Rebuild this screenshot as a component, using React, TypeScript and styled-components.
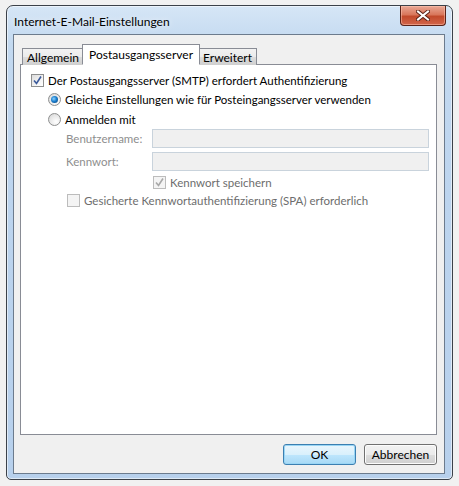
import React from 'react';
import styled, { createGlobalStyle, css } from 'styled-components';

const GlobalStyle = createGlobalStyle`
  html, body {
    margin: 0;
    padding: 0;
    background: #f1f1f1;
  }
  body {
    font-family: "Segoe UI", Lato, "Liberation Sans", sans-serif;
    font-size: 12px;
    color: #000;
  }
`;

const Page = styled.div`
  width: 459px;
  height: 486px;
  padding: 5px 6px 0 6px;
  box-sizing: border-box;
`;

// Aero glass frame around the dialog
const Window = styled.div`
  width: 447px;
  height: 475px;
  box-sizing: border-box;
  border: 1px solid #3b4149;
  border-radius: 7px 7px 5px 5px;
  background: linear-gradient(180deg, #d6e6f6 0%, #c3d9f0 8%, #bcd4ee 40%, #b7d0ec 100%);
  box-shadow: inset 0 0 0 1px rgba(255, 255, 255, 0.55);
  display: flex;
  flex-direction: column;
  padding: 0 7px 7px 6px;
`;

const TitleBar = styled.div`
  height: 28px;
  display: flex;
  justify-content: space-between;
  align-items: flex-start;
  flex-shrink: 0;
`;

const Title = styled.div`
  padding: 8px 0 0 1px;
  font-size: 12px;
  color: #000;
  text-shadow: 0 0 6px rgba(255, 255, 255, 0.9);
`;

const CloseButton = styled.div`
  width: 44px;
  height: 19px;
  margin-right: -1px;
  border: 1px solid #5a2218;
  border-top: none;
  border-radius: 0 0 4px 4px;
  background: linear-gradient(180deg, #e9a896 0%, #d9775c 45%, #c24a2c 55%, #d2664a 100%);
  box-shadow: inset 0 0 0 1px rgba(255, 200, 180, 0.5);
  display: flex;
  align-items: center;
  justify-content: center;
`;

const Client = styled.div`
  flex: 1;
  border: 1px solid #6c7b8d;
  background: #f0f0f0;
  display: flex;
  flex-direction: column;
  padding: 9px 7px 8px 6px;
`;

const TabStrip = styled.div`
  display: flex;
  align-items: flex-end;
  padding-left: 2px;
  height: 21px;
  position: relative;
  z-index: 1;
`;

const Tab = styled.div<{ $active?: boolean }>`
  box-sizing: border-box;
  border: 1px solid #898c95;
  font-size: 12px;
  white-space: nowrap;
  ${({ $active }) =>
    $active
      ? css`
          height: 21px;
          background: #fff;
          border-bottom-color: #fff;
          padding: 2px 6px 0 6px;
          margin: 0 -2px;
          position: relative;
          z-index: 2;
        `
      : css`
          height: 17px;
          line-height: 17px;
          padding: 0 4px;
          background: linear-gradient(180deg, #f2f2f2 0%, #ebebeb 50%, #dddddd 51%, #cfcfcf 100%);
          border-bottom: none;
        `}
`;

const Panel = styled.div`
  height: 371px;
  box-sizing: border-box;
  border: 1px solid #898c95;
  margin-top: -1px;
  background: #fff;
  padding: 9px 0 0 10px;
  display: flex;
  flex-direction: column;
  font-size: 11.5px;
`;

const Row = styled.div<{ $indent?: number; $top?: number }>`
  display: flex;
  align-items: center;
  margin-left: ${({ $indent }) => $indent ?? 0}px;
  margin-top: ${({ $top }) => $top ?? 0}px;
  height: 13px;
`;

const FieldRow = styled.div<{ $top?: number }>`
  display: flex;
  align-items: center;
  margin-left: 35px;
  margin-top: ${({ $top }) => $top ?? 0}px;
`;

const Label = styled.span<{ $disabled?: boolean }>`
  margin-left: 4px;
  white-space: nowrap;
  color: ${({ $disabled }) => ($disabled ? '#6d6d6d' : '#000')};
`;

const FieldLabel = styled.span`
  width: 86px;
  color: #8e8e8e;
  white-space: nowrap;
`;

const TextInput = styled.div`
  width: 277px;
  height: 19px;
  box-sizing: border-box;
  border: 1px solid #c9d3dc;
  background: #f0f0f0;
`;

const Box = styled.span<{ $disabled?: boolean }>`
  width: 13px;
  height: 13px;
  box-sizing: border-box;
  flex-shrink: 0;
  border: 1px solid ${({ $disabled }) => ($disabled ? '#bcbcbc' : '#8e8f8f')};
  background: ${({ $disabled }) =>
    $disabled ? '#f4f4f4' : 'linear-gradient(135deg, #dcdcdc 0%, #f3f3f3 60%, #ffffff 100%)'};
  display: flex;
  align-items: center;
  justify-content: center;
`;

const Radio = styled.span`
  width: 13px;
  height: 13px;
  box-sizing: border-box;
  flex-shrink: 0;
  border-radius: 50%;
  border: 1px solid #8e8f8f;
  background: radial-gradient(circle at 65% 70%, #ffffff 0%, #e6e6e6 60%, #cfcfcf 100%);
  display: flex;
  align-items: center;
  justify-content: center;
`;

const RadioDot = styled.span`
  width: 7px;
  height: 7px;
  border-radius: 50%;
  background: radial-gradient(circle at 40% 40%, #8fd3ff 0%, #1a7fcf 45%, #0d3c6e 100%);
`;

const ButtonRow = styled.div`
  display: flex;
  justify-content: flex-end;
  gap: 8px;
  margin-top: 9px;
`;

const Button = styled.div<{ $default?: boolean }>`
  width: 73px;
  height: 21px;
  box-sizing: border-box;
  border-radius: 3px;
  display: flex;
  align-items: center;
  justify-content: center;
  font-size: 12px;
  ${({ $default }) =>
    $default
      ? css`
          border: 1px solid #3c7fb1;
          background: linear-gradient(180deg, #eaf6fd 0%, #d9f0fc 50%, #bee6fd 51%, #a7d9f5 100%);
          box-shadow: inset 0 0 0 1px #9ad6f5;
        `
      : css`
          border: 1px solid #707070;
          background: linear-gradient(180deg, #f2f2f2 0%, #ebebeb 50%, #dddddd 51%, #cfcfcf 100%);
          box-shadow: inset 0 0 0 1px #fcfcfc;
        `}
`;

const Check = ({ color }: { color: string }) => (
  <svg width="9" height="9" viewBox="0 0 9 9">
    <path d="M1 4.5 L3.5 7.5 L8 0.5" fill="none" stroke={color} strokeWidth="1.6" />
  </svg>
);

const CloseGlyph = () => (
  <svg width="14" height="11" viewBox="0 0 14 11">
    <path d="M2 1.5 L12 9.5 M12 1.5 L2 9.5" stroke="#5a2218" strokeWidth="4" strokeLinecap="square" />
    <path d="M2 1.5 L12 9.5 M12 1.5 L2 9.5" stroke="#ffffff" strokeWidth="2" strokeLinecap="square" />
  </svg>
);

export default function App() {
  return (
    <Page>
      <GlobalStyle />
      <Window>
        <TitleBar>
          <Title>Internet-E-Mail-Einstellungen</Title>
          <CloseButton>
            <CloseGlyph />
          </CloseButton>
        </TitleBar>
        <Client>
          <TabStrip>
            <Tab>Allgemein</Tab>
            <Tab $active>Postausgangsserver</Tab>
            <Tab>Erweitert</Tab>
          </TabStrip>
          <Panel>
            <Row>
              <Box>
                <Check color="#3b5a9b" />
              </Box>
              <Label>Der Postausgangsserver (SMTP) erfordert Authentifizierung</Label>
            </Row>
            <Row $indent={17} $top={6}>
              <Radio>
                <RadioDot />
              </Radio>
              <Label>Gleiche Einstellungen wie für Posteingangsserver verwenden</Label>
            </Row>
            <Row $indent={17} $top={7}>
              <Radio />
              <Label>Anmelden mit</Label>
            </Row>
            <FieldRow $top={3}>
              <FieldLabel>Benutzername:</FieldLabel>
              <TextInput />
            </FieldRow>
            <FieldRow $top={4}>
              <FieldLabel>Kennwort:</FieldLabel>
              <TextInput />
            </FieldRow>
            <Row $indent={122} $top={5}>
              <Box $disabled>
                <Check color="#a8a8a8" />
              </Box>
              <Label $disabled>Kennwort speichern</Label>
            </Row>
            <Row $indent={36} $top={5}>
              <Box $disabled />
              <Label $disabled>Gesicherte Kennwortauthentifizierung (SPA) erforderlich</Label>
            </Row>
          </Panel>
          <ButtonRow>
            <Button $default>OK</Button>
            <Button>Abbrechen</Button>
          </ButtonRow>
        </Client>
      </Window>
    </Page>
  );
}
